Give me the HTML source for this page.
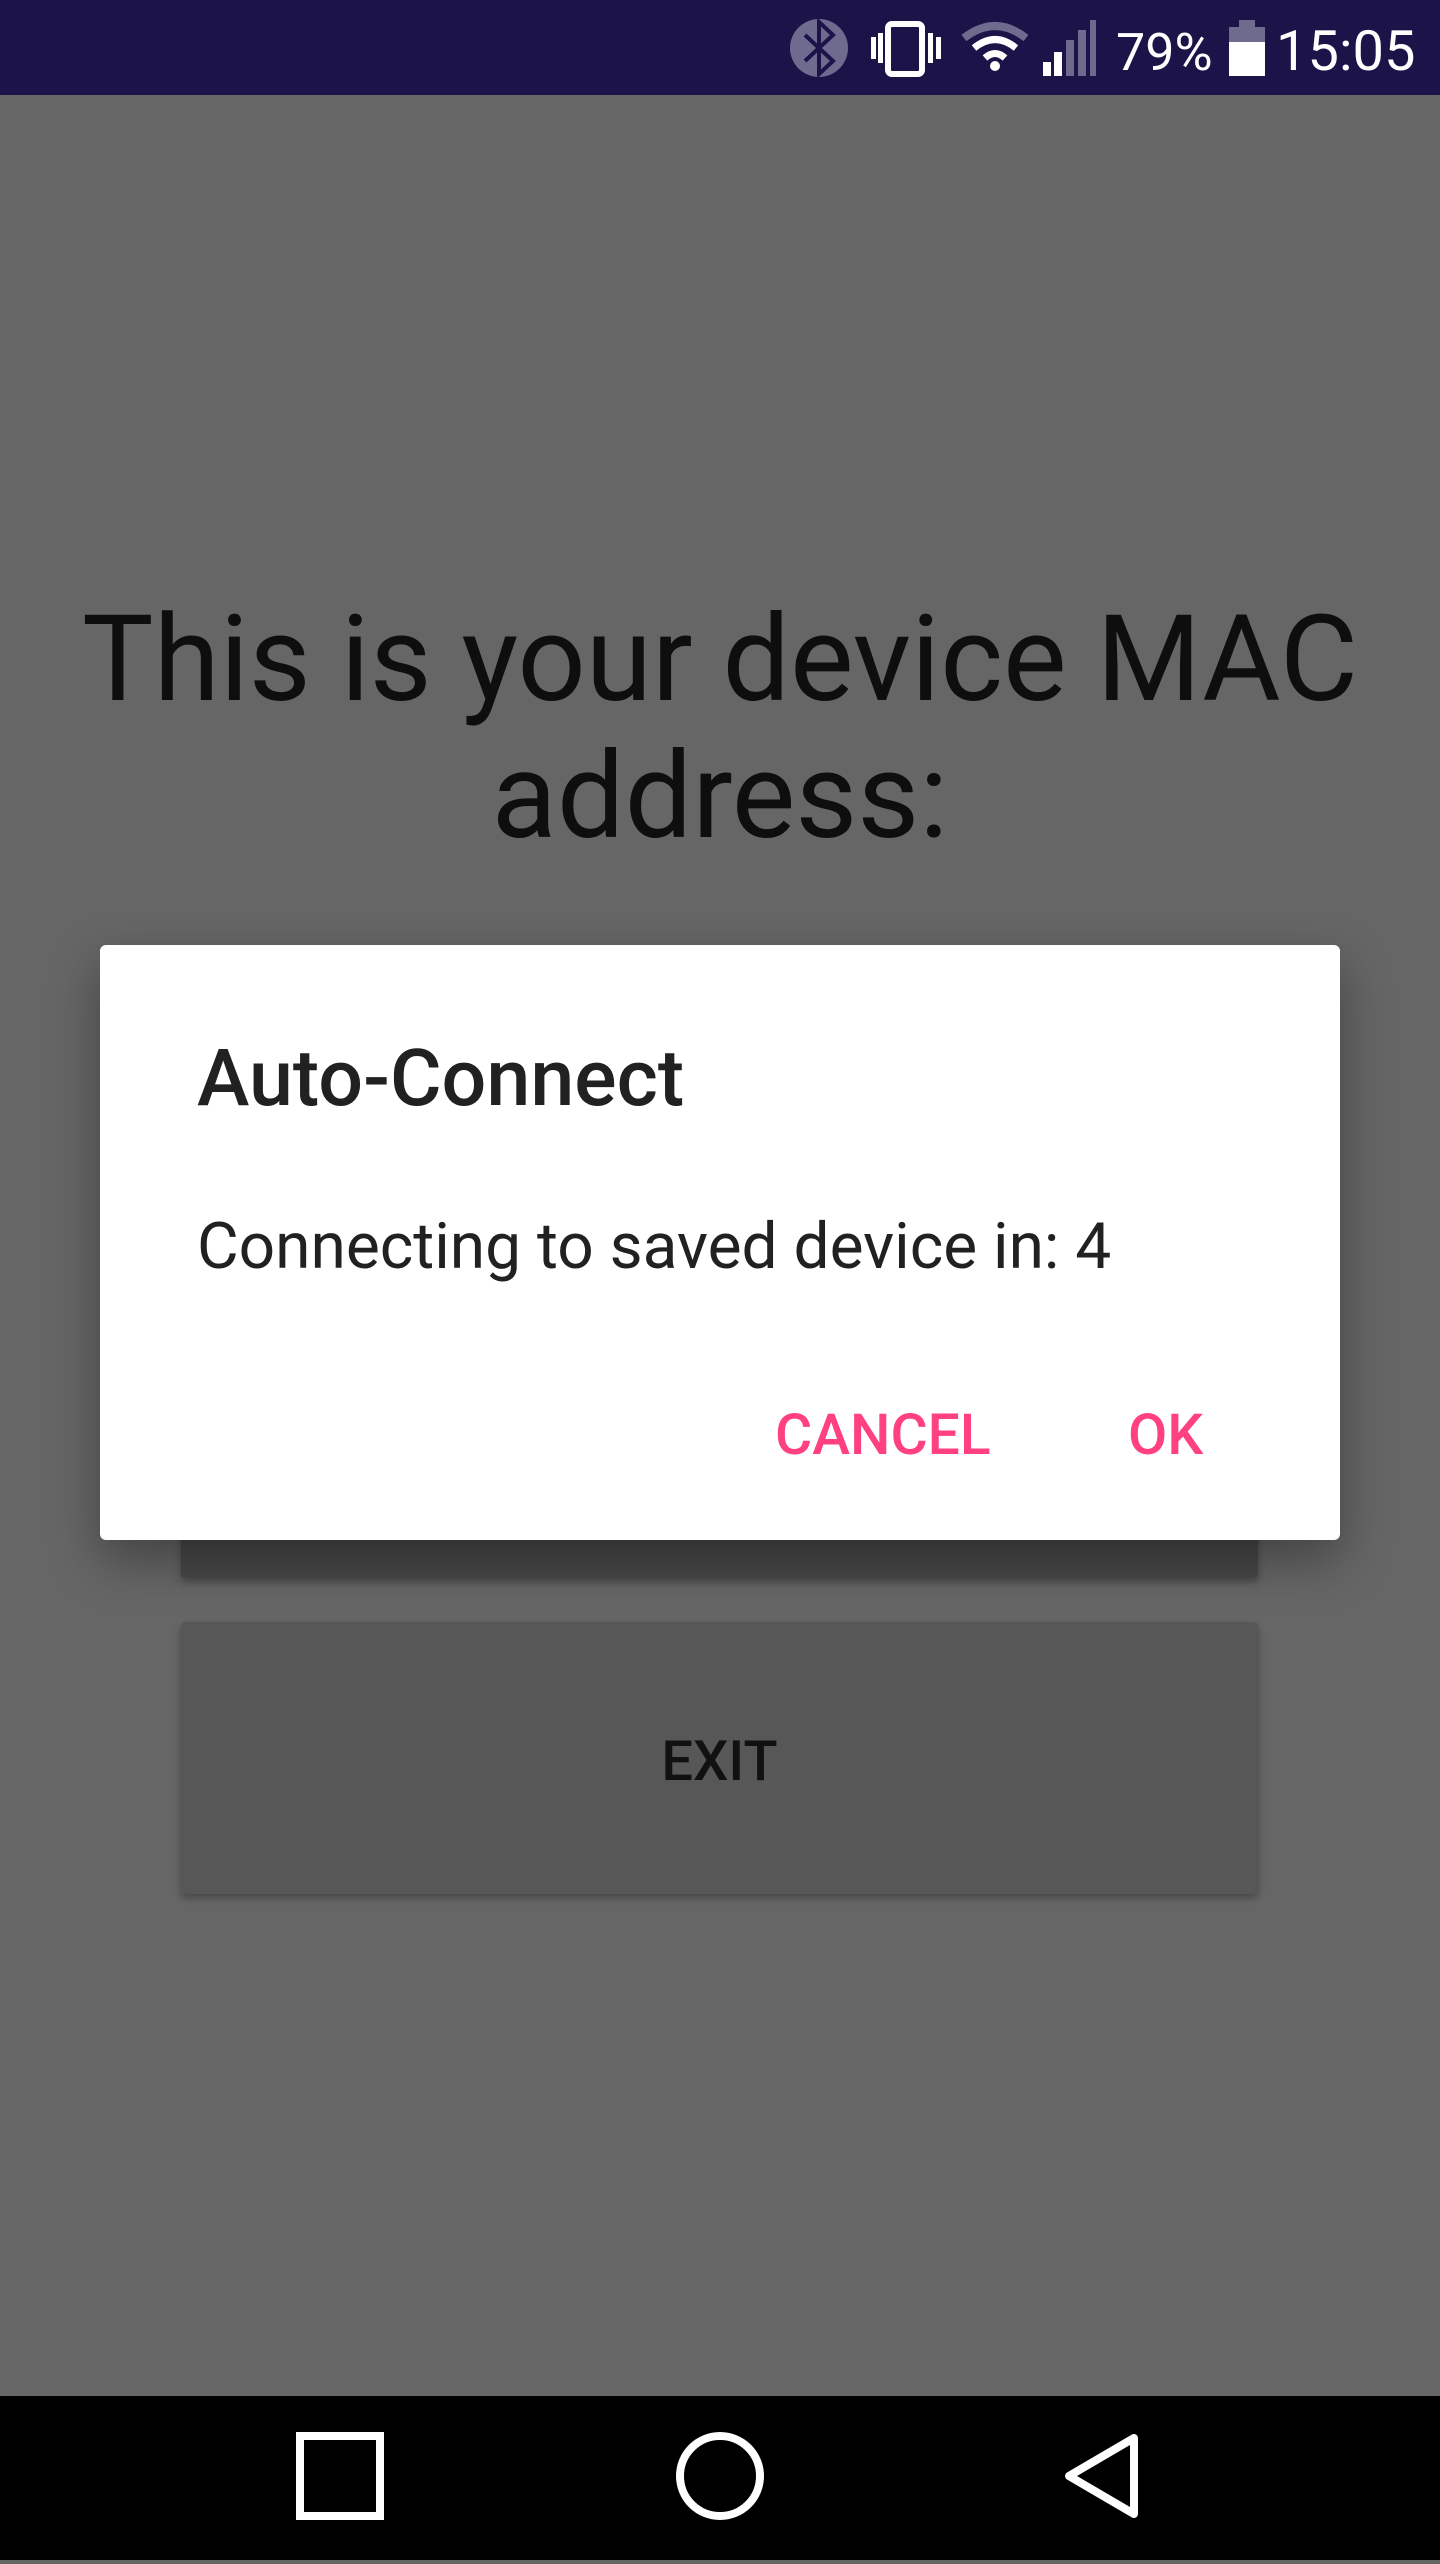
<!DOCTYPE html>
<html><head><meta charset="utf-8"><style>
*{margin:0;padding:0;box-sizing:border-box}
body{width:1440px;height:2560px;background:#666;position:relative;overflow:hidden;font-family:"Roboto","Liberation Sans",sans-serif}
.abs{position:absolute}
#sb{left:0;top:0;width:1440px;height:95px;background:#1c1349}
#nav{left:0;top:2396px;width:1440px;height:164px;background:#000}
.t{white-space:nowrap}
</style></head><body>
<div id="sb" class="abs">
<svg class="abs" style="left:0;top:0" width="1440" height="95">
<ellipse cx="819" cy="48" rx="29" ry="29" fill="#6f6b8f"/>
<path d="M805 35 L833 61 L819 74 L819 22 L833 35 L805 61" fill="none" stroke="#1c1349" stroke-width="4"/>
<rect x="888" y="24" width="34" height="50" rx="4" fill="none" stroke="#fff" stroke-width="6"/>
<rect x="871" y="37" width="5" height="22" fill="#fff"/><rect x="878" y="33" width="5" height="30" fill="#fff"/>
<rect x="928" y="33" width="5" height="30" fill="#fff"/><rect x="936" y="37" width="5" height="22" fill="#fff"/>
<path d="M964 38 Q995 14 1026 38" fill="none" stroke="#6f6b8f" stroke-width="8"/>
<path d="M974 48 Q995 31 1016 48" fill="none" stroke="#fff" stroke-width="7"/>
<path d="M985 58 Q995 49 1005 58" fill="none" stroke="#fff" stroke-width="7"/>
<circle cx="995" cy="66" r="5" fill="#fff"/>
<rect x="1043" y="62" width="8" height="14" fill="#fff"/><rect x="1054" y="52" width="8" height="24" fill="#fff"/>
<rect x="1066" y="40" width="8" height="36" fill="#6f6b8f"/><rect x="1078" y="30" width="8" height="46" fill="#6f6b8f"/><rect x="1090" y="20" width="6" height="56" fill="#6f6b8f"/>
<rect x="1239" y="20" width="16" height="8" fill="#6f6b8f"/><rect x="1229" y="27" width="36" height="15" fill="#6f6b8f"/><rect x="1229" y="42" width="36" height="34" fill="#fff"/>
<text x="1116" y="70" font-size="52" fill="#fff">79%</text>
<text x="1276" y="70" font-size="56" fill="#fff">15:05</text>
</svg>
</div>
<div class="abs t" style="left:0;width:1440px;top:592px;text-align:center;font-size:120px;line-height:137px;color:#0e0e0e">This is your device MAC<br>address:</div>
<div class="abs" style="left:181px;top:1400px;width:1077px;height:178px;background:#484848;border-radius:4px;box-shadow:0 4px 8px rgba(0,0,0,.3)"></div>
<div class="abs" style="left:181px;top:1622px;width:1077px;height:272px;background:#575757;border-radius:4px;box-shadow:0 4px 8px rgba(0,0,0,.3)"></div>
<div class="abs t" style="left:181px;width:1077px;top:1728px;text-align:center;font-size:56px;font-weight:500;color:#111">EXIT</div>
<div class="abs" style="left:100px;top:945px;width:1240px;height:595px;background:#fff;border-radius:6px;box-shadow:0 20px 50px rgba(0,0,0,.35)"></div>
<div class="abs t" style="left:197px;top:1033px;font-size:79px;font-weight:500;color:#212121">Auto-Connect</div>
<div class="abs t" style="left:197px;top:1209px;font-size:64px;color:#212121">Connecting to saved device in: 4</div>
<div class="abs t" style="left:775px;top:1401px;font-size:57px;font-weight:500;color:#ff4081">CANCEL</div>
<div class="abs t" style="left:1128px;top:1401px;font-size:57px;font-weight:500;color:#ff4081">OK</div>
<div id="nav" class="abs">
<svg width="1440" height="164">
<rect x="300" y="40" width="80" height="80" fill="none" stroke="#fff" stroke-width="8"/>
<circle cx="720" cy="80" r="40" fill="none" stroke="#fff" stroke-width="8"/>
<path d="M1134 42 L1134 118 L1069 80 Z" fill="none" stroke="#fff" stroke-width="8" stroke-linejoin="round"/>
</svg>
</div>
</body></html>
